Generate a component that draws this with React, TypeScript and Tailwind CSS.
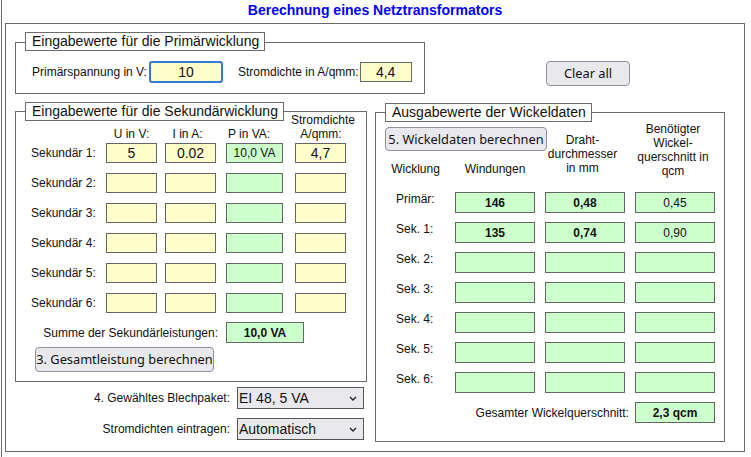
import type { ReactNode } from "react";

type FrameProps = {
  legend: string;
  className: string;
  legendClass?: string;
  children: ReactNode;
};

// fieldset-like frame with the caption boxed on the top border
function Frame({ legend, className, legendClass = "-top-[10px]", children }: FrameProps) {
  return (
    <div className={`relative shrink-0 border border-[#6b6b6b] ${className}`}>
      <div
        className={`absolute left-[9px] h-[19px] whitespace-nowrap border border-[#6b6b6b] bg-white pl-[6px] pr-[5px] text-[14px] leading-[17px] text-[#111] ${legendClass}`}
      >
        {legend}
      </div>
      {children}
    </div>
  );
}

function Field({ value = "", className }: { value?: string; className: string }) {
  return (
    <input
      defaultValue={value}
      className={`shrink-0 border border-[#666] bg-[#ffffcc] text-center text-[14px] text-[#111] outline-none ${className}`}
    />
  );
}

function Result({ value = "", bold = false, className }: { value?: string; bold?: boolean; className: string }) {
  return (
    <div
      className={`flex shrink-0 items-center justify-center border border-[#666] bg-[#ccffcc] text-[12px] text-[#111] ${bold ? "font-bold" : ""} ${className}`}
    >
      {value}
    </div>
  );
}

function Button({ label, className }: { label: string; className: string }) {
  return (
    <button
      type="button"
      className={`shrink-0 rounded-[4px] border border-[#8f8f9d] bg-[#e9e9ed] font-['Noto_Sans',sans-serif] text-[12.8px] text-[#111] ${className}`}
    >
      {label}
    </button>
  );
}

function Dropdown({ value }: { value: string }) {
  return (
    <div className="ml-[7px] flex h-[22px] w-[127px] shrink-0 items-center justify-between border border-[#555] bg-[#e9e9ed] pl-px pr-[6px] text-[14px] text-[#111]">
      <span>{value}</span>
      <svg width="8" height="5" viewBox="0 0 8 5" fill="none">
        <path d="M1 1l3 3 3-3" stroke="#222" strokeWidth="1.4" />
      </svg>
    </div>
  );
}

const secondaryRows = [
  { u: "5", i: "0.02", p: "10,0 VA", s: "4,7" },
  { u: "", i: "", p: "", s: "" },
  { u: "", i: "", p: "", s: "" },
  { u: "", i: "", p: "", s: "" },
  { u: "", i: "", p: "", s: "" },
  { u: "", i: "", p: "", s: "" },
];

const windingRows = [
  { label: "Primär:", turns: "146", wire: "0,48", area: "0,45" },
  { label: "Sek. 1:", turns: "135", wire: "0,74", area: "0,90" },
  { label: "Sek. 2:", turns: "", wire: "", area: "" },
  { label: "Sek. 3:", turns: "", wire: "", area: "" },
  { label: "Sek. 4:", turns: "", wire: "", area: "" },
  { label: "Sek. 5:", turns: "", wire: "", area: "" },
  { label: "Sek. 6:", turns: "", wire: "", area: "" },
];

export default function App() {
  return (
    <div className="h-[457px] w-[751px] overflow-hidden bg-white font-['Liberation_Sans',Arial,sans-serif] text-[12px] text-[#111]">
      <div className="ml-px h-full border-l border-[#6b6b6b] pl-[3px]">
        <h1 className="h-[23px] w-[740px] pt-[2px] text-center text-[14px] font-bold leading-[16px] text-[#0000ff]">
          Berechnung eines Netztransformators
        </h1>

        <div className="h-[429px] w-[740px] border border-[#6b6b6b]">
          {/* primary winding inputs + reset */}
          <div className="flex items-start pl-[9px]">
            <Frame legend="Eingabewerte für die Primärwicklung" className="mt-[18px] h-[52px] w-[410px]" legendClass="-top-[11px]">
              <div className="mt-[18px] flex h-[22px] items-center pl-[16px]">
                <span>Primärspannung in V:</span>
                <input
                  defaultValue="10"
                  className="ml-[2px] h-[22px] w-[74px] shrink-0 rounded-[3px] border-2 border-[#3b78d6] bg-[#ffffcc] text-center text-[14px] outline-none"
                />
                <span className="ml-[15px]">Stromdichte in A/qmm:</span>
                <Field value="4,4" className="ml-px h-[20px] w-[52px]" />
              </div>
            </Frame>
            <Button label="Clear all" className="ml-[121px] mt-[37px] h-[25px] w-[84px]" />
          </div>

          <div className="mt-[17px] flex items-start pl-[9px]">
            {/* secondary windings */}
            <div className="flex flex-col">
              <Frame legend="Eingabewerte für die Sekundärwicklung" className="h-[271px] w-[352px]">
                <div className="mt-px flex h-[28px] items-end leading-[14px]">
                  <div className="w-[90px] shrink-0" />
                  <div className="w-[51px] shrink-0 text-center">U in V:</div>
                  <div className="ml-[5px] w-[51px] shrink-0 text-center">I in A:</div>
                  <div className="ml-[7px] w-[58px] shrink-0 text-center">P in VA:</div>
                  <div className="ml-[13px] w-[60px] shrink-0 whitespace-nowrap text-center">
                    Stromdichte
                    <br />
                    A/qmm:
                  </div>
                </div>

                <div className="mt-[2px] flex flex-col gap-[10px]">
                  {secondaryRows.map((row, idx) => (
                    <div key={idx} className="flex h-[20px] items-center">
                      <span className="w-[90px] shrink-0 pl-[15px]">Sekundär {idx + 1}:</span>
                      <Field value={row.u} className="h-[20px] w-[51px]" />
                      <Field value={row.i} className="ml-[8px] h-[20px] w-[51px]" />
                      <Result value={row.p} className="ml-[10px] h-[20px] w-[57px]" />
                      <Field value={row.s} className="ml-[12px] h-[20px] w-[51px]" />
                    </div>
                  ))}
                </div>

                <div className="mt-[9px] flex h-[21px] items-center">
                  <span className="w-[202px] shrink-0 text-right">Summe der Sekundärleistungen:</span>
                  <Result value="10,0 VA" bold className="ml-[8px] h-[21px] w-[78px]" />
                </div>

                <Button label="3. Gesamtleistung berechnen" className="ml-[19px] mt-[4px] h-[25px] w-[179px]" />
              </Frame>

              <div className="mt-[5px] flex h-[22px] items-center">
                <span className="w-[215px] shrink-0 text-right">4. Gewähltes Blechpaket:</span>
                <Dropdown value="EI 48, 5 VA" />
              </div>
              <div className="mt-[9px] flex h-[22px] items-center">
                <span className="w-[215px] shrink-0 text-right">Stromdichten eintragen:</span>
                <Dropdown value="Automatisch" />
              </div>
            </div>

            {/* computed winding data */}
            <Frame legend="Ausgabewerte der Wickeldaten" className="ml-[8px] mt-px h-[330px] w-[350px]">
              <div className="flex h-[79px] leading-[14px]">
                <div className="flex w-[159px] shrink-0 flex-col">
                  <Button label="5. Wickeldaten berechnen" className="ml-[9px] mt-[14px] h-[24px] w-[162px]" />
                  <div className="mt-[11px] flex">
                    <span className="w-[79px] shrink-0 text-center">Wicklung</span>
                    <span className="w-[80px] shrink-0 text-center">Windungen</span>
                  </div>
                </div>
                <div className="ml-[10px] w-[80px] shrink-0 pr-[5px] pt-[20px] text-center">
                  Draht-
                  <br />
                  durchmesser
                  <br />
                  in mm
                </div>
                <div className="ml-[10px] w-[80px] shrink-0 pr-[4px] pt-[9px] text-center">
                  Benötigter
                  <br />
                  Wickel-
                  <br />
                  querschnitt in
                  <br />
                  qcm
                </div>
              </div>

              <div className="flex flex-col gap-[9px]">
                {windingRows.map((row) => (
                  <div key={row.label} className="flex h-[21px] items-start">
                    <span className="w-[79px] shrink-0 pl-[20px] leading-[14px]">{row.label}</span>
                    <Result value={row.turns} bold className="h-[21px] w-[80px]" />
                    <Result value={row.wire} bold className="ml-[10px] h-[21px] w-[80px]" />
                    <Result value={row.area} className="ml-[10px] h-[21px] w-[80px]" />
                  </div>
                ))}
              </div>

              <div className="mt-[9px] flex h-[21px] items-center">
                <span className="w-[253px] shrink-0 text-right">Gesamter Wickelquerschnitt:</span>
                <Result value="2,3 qcm" bold className="ml-[6px] h-[21px] w-[80px]" />
              </div>
            </Frame>
          </div>
        </div>
      </div>
    </div>
  );
}
